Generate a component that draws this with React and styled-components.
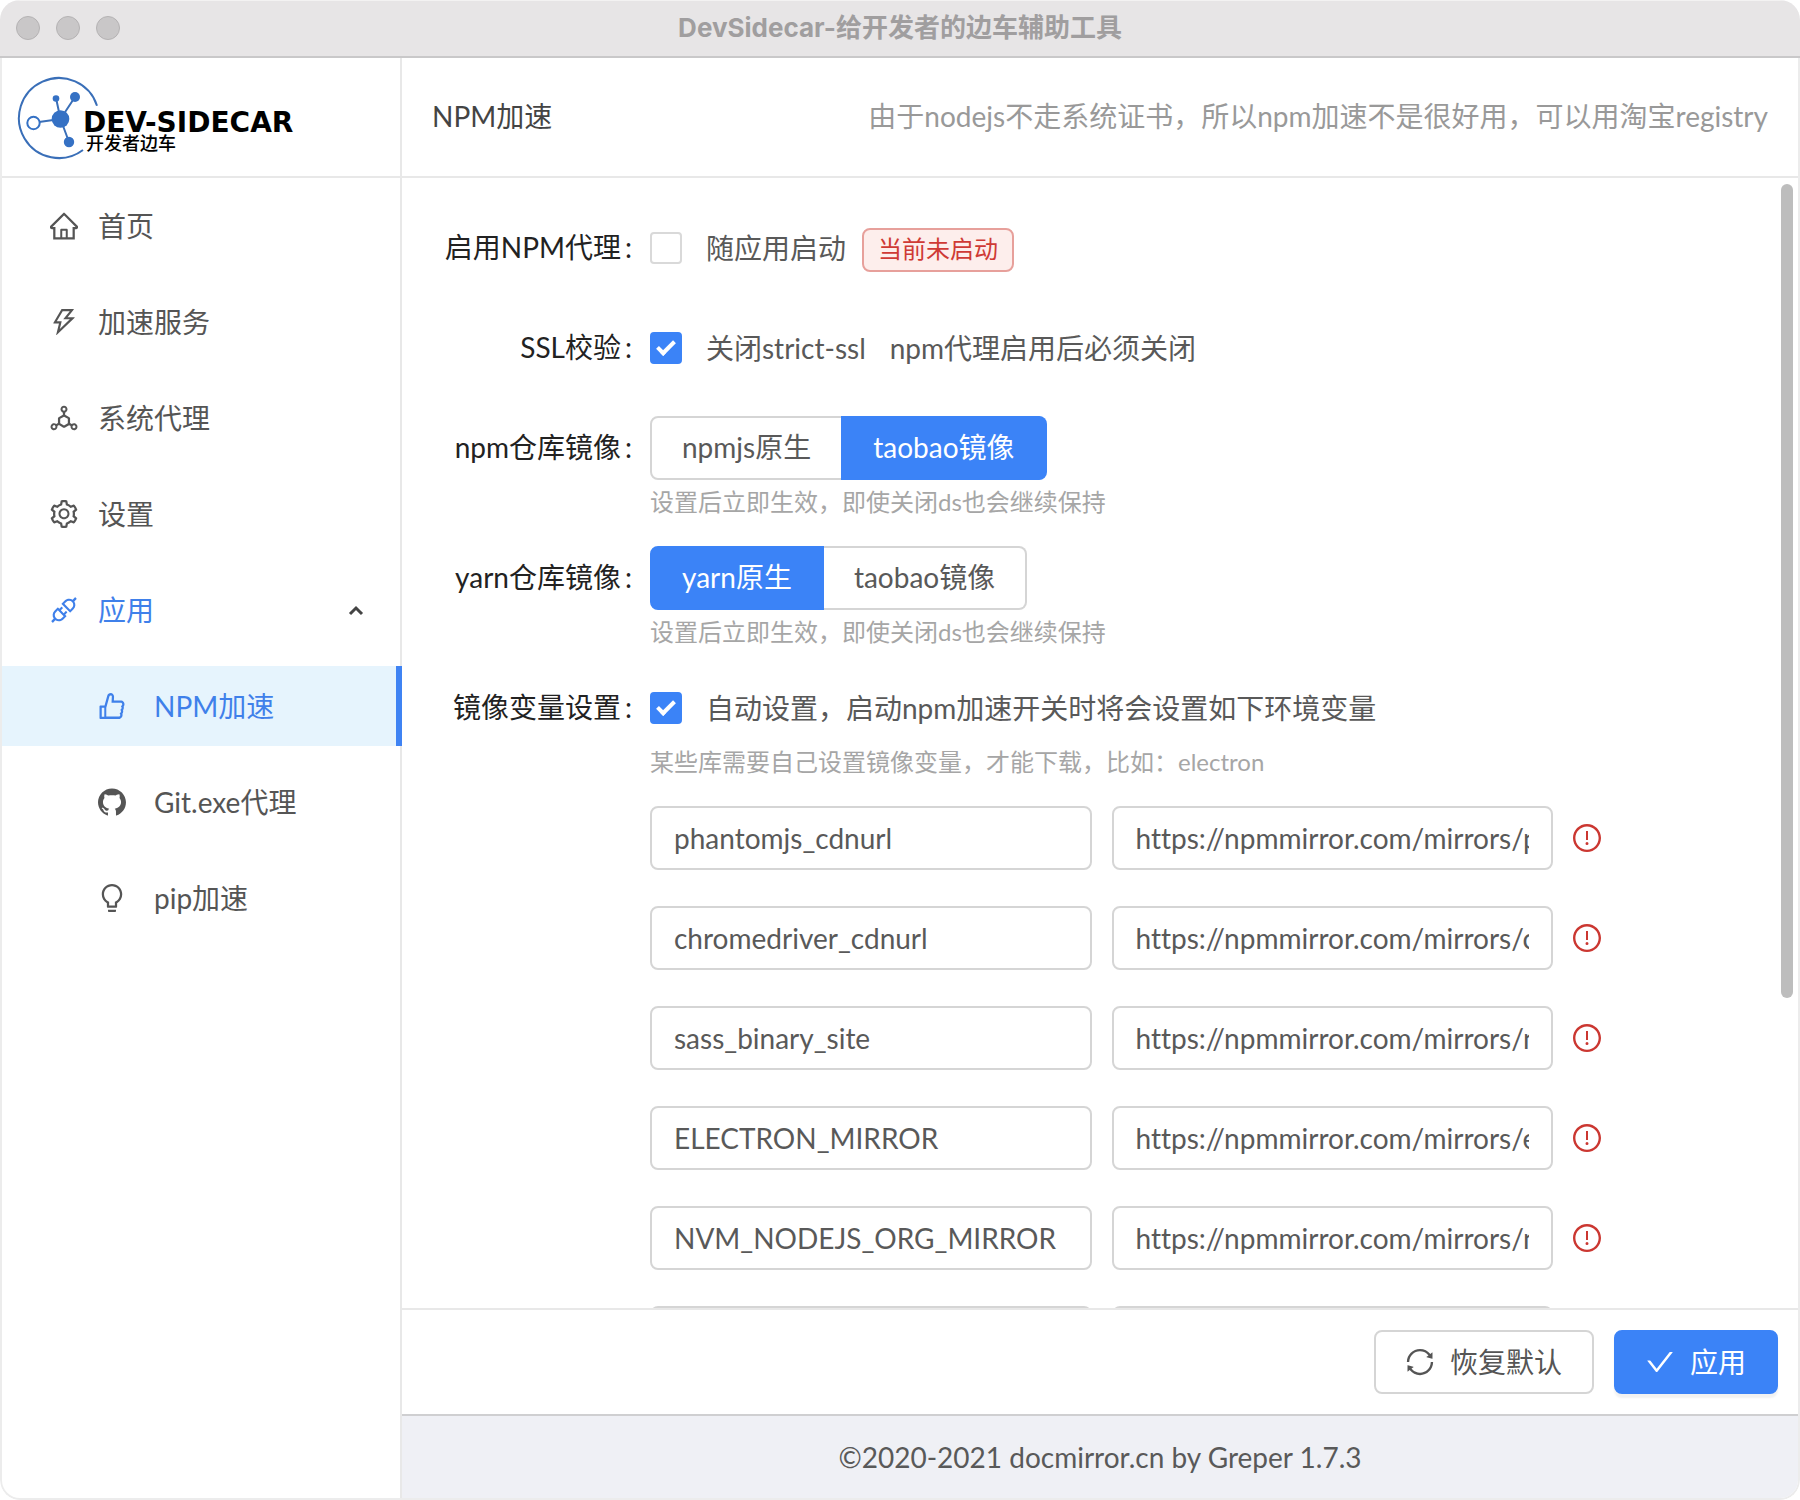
import React, { useState } from 'react';
import styled, { createGlobalStyle } from 'styled-components';
import {
  AiOutlineHome,
  AiOutlineThunderbolt,
  AiOutlineDeploymentUnit,
  AiOutlineSetting,
  AiOutlineApi,
  AiOutlineLike,
  AiFillGithub,
  AiOutlineBulb,
  AiOutlineExclamationCircle,
  AiOutlineSync,
  AiOutlineCheck,
} from 'react-icons/ai';

// trims the blank edge that the icon set leaves round each glyph
const iconBox = '64 64 896 896';

const menu = [
  { text: '首页', icon: AiOutlineHome },
  { text: '加速服务', icon: AiOutlineThunderbolt },
  { text: '系统代理', icon: AiOutlineDeploymentUnit },
  { text: '设置', icon: AiOutlineSetting },
];

const subMenu = [
  { text: 'NPM加速', icon: AiOutlineLike, active: true },
  { text: 'Git.exe代理', icon: AiFillGithub },
  { text: 'pip加速', icon: AiOutlineBulb },
];

const variables = [
  { key: 'phantomjs_cdnurl', value: 'https://npmmirror.com/mirrors/phantomjs' },
  { key: 'chromedriver_cdnurl', value: 'https://npmmirror.com/mirrors/chromedriver' },
  { key: 'sass_binary_site', value: 'https://npmmirror.com/mirrors/node-sass' },
  { key: 'ELECTRON_MIRROR', value: 'https://npmmirror.com/mirrors/electron/' },
  { key: 'NVM_NODEJS_ORG_MIRROR', value: 'https://npmmirror.com/mirrors/node' },
  { key: 'CHROMEDRIVER_CDNURL', value: 'https://npmmirror.com/mirrors/chromedriver' },
];

const Logo = () => (
  <LogoSvg viewBox="0 0 290 88" role="img" aria-label="DEV-SIDECAR 开发者边车">
    <g fill="none" stroke="#3a6fb8" strokeWidth="2">
      <path d="M81 31.700A40 40 0 1 0 67 76" />
      <path d="M44.500 45L40 24M44.500 45L59 23M44.500 45L23 48M44.500 45L53 68" />
    </g>
    <g fill="#3571c4">
      <circle cx="44.500" cy="45" r="8.800" />
      <circle cx="40" cy="24.500" r="3.300" />
      <circle cx="59" cy="23" r="5" />
      <circle cx="53" cy="68" r="5.200" />
    </g>
    <circle cx="17.500" cy="49" r="6.200" fill="#fff" stroke="#3571c4" strokeWidth="2" />
    <LogoName x="67" y="58">DEV-SIDECAR</LogoName>
    <LogoSub x="70" y="76">开发者边车</LogoSub>
  </LogoSvg>
);

const Registry = ({ name, options, selected, label }) => {
  const [value, setValue] = useState(selected);
  return (
    <RadioGroup role="radiogroup" aria-label={label}>
      {options.map((option) => (
        <RadioButton key={option} $checked={value === option}>
          <input
            type="radio"
            name={name}
            checked={value === option}
            onChange={() => setValue(option)}
          />
          {option}
        </RadioButton>
      ))}
    </RadioGroup>
  );
};

const App = () => {
  return (
    <>
      <GlobalStyle />
      <Window>
        <TitleBar>
          <Lights>
            <Light />
            <Light />
            <Light />
          </Lights>
          <WindowTitle>DevSidecar-给开发者的边车辅助工具</WindowTitle>
        </TitleBar>
        <Body>
          <Sidebar>
            <LogoBox>
              <Logo />
            </LogoBox>
            <Menu>
              {menu.map(({ text, icon: Icon }) => (
                <MenuItem key={text} href="#">
                  <Icon viewBox={iconBox} />
                  {text}
                </MenuItem>
              ))}
              <MenuToggle type="button" aria-expanded="true">
                <AiOutlineApi viewBox={iconBox} />
                应用
                <Arrow viewBox="0 0 16 12">
                  <path d="M2 10L8 4L14 10" />
                </Arrow>
              </MenuToggle>
              {subMenu.map(({ text, icon: Icon, active }) => (
                <SubMenuItem key={text} href="#" $active={active}>
                  <Icon viewBox={iconBox} />
                  {text}
                </SubMenuItem>
              ))}
            </Menu>
          </Sidebar>
          <Main>
            <Header>
              <PageTitle>NPM加速</PageTitle>
              <Notice>由于nodejs不走系统证书，所以npm加速不是很好用，可以用淘宝registry</Notice>
            </Header>
            <ScrollArea>
              <Form id="npm-form">
                <FormRow>
                  <Label htmlFor="startup">启用NPM代理<Colon>:</Colon></Label>
                  <Line>
                    <Checkbox id="startup" type="checkbox" />
                    <label htmlFor="startup">随应用启动</label>
                    <Tag>当前未启动</Tag>
                  </Line>
                </FormRow>
                <FormRow>
                  <Label htmlFor="ssl">SSL校验<Colon>:</Colon></Label>
                  <Line>
                    <Checkbox id="ssl" type="checkbox" defaultChecked />
                    <label htmlFor="ssl">关闭strict-ssl</label>
                    <Hint>npm代理启用后必须关闭</Hint>
                  </Line>
                </FormRow>
                <FormRow $tight>
                  <Label as="div">npm仓库镜像<Colon>:</Colon></Label>
                  <div>
                    <Registry
                      name="npm"
                      label="npm仓库镜像"
                      options={['npmjs原生', 'taobao镜像']}
                      selected="taobao镜像"
                    />
                    <Help>设置后立即生效，即使关闭ds也会继续保持</Help>
                  </div>
                </FormRow>
                <FormRow $tight>
                  <Label as="div">yarn仓库镜像<Colon>:</Colon></Label>
                  <div>
                    <Registry
                      name="yarn"
                      label="yarn仓库镜像"
                      options={['yarn原生', 'taobao镜像']}
                      selected="yarn原生"
                    />
                    <Help>设置后立即生效，即使关闭ds也会继续保持</Help>
                  </div>
                </FormRow>
                <FormRow>
                  <Label htmlFor="variables">镜像变量设置<Colon>:</Colon></Label>
                  <div>
                    <Line>
                      <Checkbox id="variables" type="checkbox" defaultChecked />
                      <label htmlFor="variables">自动设置，启动npm加速开关时将会设置如下环境变量</label>
                    </Line>
                    <Help>某些库需要自己设置镜像变量，才能下载，比如：electron</Help>
                    <Variables>
                      {variables.map(({ key, value }) => (
                        <VariableRow key={key}>
                          <Input defaultValue={key} aria-label="变量名" />
                          <Input defaultValue={value} aria-label={key} />
                          <AiOutlineExclamationCircle viewBox={iconBox} />
                        </VariableRow>
                      ))}
                    </Variables>
                  </div>
                </FormRow>
              </Form>
              <Thumb />
            </ScrollArea>
            <Actions>
              <Button type="reset" form="npm-form">
                <AiOutlineSync viewBox={iconBox} />
                恢复默认
              </Button>
              <Button type="button" $primary>
                <AiOutlineCheck viewBox={iconBox} />
                应用
              </Button>
            </Actions>
            <Footer>©2020-2021 docmirror.cn by Greper 1.7.3</Footer>
          </Main>
        </Body>
      </Window>
    </>
  );
};

const GlobalStyle = createGlobalStyle`
  * {
    box-sizing: border-box;
  }
  body {
    margin: 0;
    background: #fff;
    color: #595959;
    font-family: Lato, "Noto Sans CJK SC", sans-serif;
    font-size: 28px;
    font-variant-ligatures: none;
    line-height: 44px;
  }
  input, button {
    font: inherit;
    font-variant-ligatures: none;
    color: inherit;
  }
`;

const Window = styled.div`
  display: flex;
  flex-direction: column;
  height: 100vh;
  border-radius: 20px;
  overflow: hidden;
`;

const TitleBar = styled.header`
  flex: none;
  display: grid;
  grid-template-columns: 1fr auto 1fr;
  align-items: center;
  height: 58px;
  padding: 0 16px 2px;
  background: #e7e5e6;
  border-top: 1px solid #f3f2f2;
  border-bottom: 2px solid #c9c8c9;
`;

const Lights = styled.div`
  display: flex;
  gap: 16px;
`;

const Light = styled.span`
  width: 24px;
  height: 24px;
  border: 1px solid #b4b2b3;
  border-radius: 50%;
  background: #c9c7c8;
`;

const WindowTitle = styled.span`
  color: #a09e9f;
  font-family: Inter, "Noto Sans CJK SC", sans-serif;
  font-size: 26px;
  font-weight: 700;
`;

const Body = styled.div`
  flex: 1;
  min-height: 0;
  display: flex;
  border: 2px solid #ececec;
  border-top: 0;
  border-radius: 0 0 20px 20px;
  overflow: hidden;
`;

const Sidebar = styled.aside`
  flex: none;
  width: 400px;
  border-right: 2px solid #e8e8e8;
`;

const LogoBox = styled.div`
  height: 120px;
  padding: 16px 14px;
  border-bottom: 2px solid #e8e8e8;
`;

const LogoSvg = styled.svg`
  display: block;
  width: 290px;
  height: 88px;
`;

const LogoName = styled.text`
  fill: #000;
  font-family: "DejaVu Sans", sans-serif;
  font-size: 28px;
  font-weight: 700;
`;

const LogoSub = styled.text`
  fill: #000;
  font-family: "Noto Sans CJK SC", sans-serif;
  font-size: 18px;
  font-weight: 500;
`;

const Menu = styled.nav`
  display: flex;
  flex-direction: column;
  gap: 16px;
  padding-top: 8px;
`;

const MenuItem = styled.a`
  display: flex;
  align-items: center;
  gap: 20px;
  height: 80px;
  padding: 0 36px 0 48px;
  color: #555;
  text-decoration: none;
`;

const MenuToggle = styled(MenuItem).attrs({ as: 'button' })`
  border: 0;
  background: none;
  color: #3f80ea;
`;

const SubMenuItem = styled(MenuItem)`
  gap: 28px;
  padding-left: 96px;
  margin-right: -2px;
  ${({ $active }) =>
    $active &&
    `
    color: #3f80ea;
    background: #e6f4fd;
    border-right: 6px solid #3f83f3;
  `}
`;

const Arrow = styled.svg`
  width: 16px;
  height: 12px;
  margin-left: auto;
  fill: none;
  stroke: #444;
  stroke-width: 3;
`;

const Main = styled.main`
  flex: 1;
  min-width: 0;
  display: flex;
  flex-direction: column;
`;

const Header = styled.div`
  flex: none;
  display: flex;
  align-items: center;
  justify-content: space-between;
  height: 120px;
  padding: 0 30px 2px;
  border-bottom: 2px solid #e8e8e8;
`;

const PageTitle = styled.h1`
  margin: 0;
  color: #444;
  font-size: 28px;
  font-weight: 400;
`;

const Notice = styled.span`
  color: #999;
`;

const ScrollArea = styled.div`
  position: relative;
  flex: 1;
  min-height: 0;
  display: flex;
`;

const Form = styled.form`
  flex: 1;
  min-width: 0;
  padding: 38px 197px 0 0;
  overflow-y: auto;
  scrollbar-width: none;
`;

// floats over the content like a macOS scrollbar
const Thumb = styled.div`
  position: absolute;
  top: 6px;
  right: 5px;
  width: 12px;
  height: 72%;
  border-radius: 6px;
  background: #bdbdbd;
`;

const FormRow = styled.div`
  display: grid;
  grid-template-columns: 230px minmax(0, 1fr);
  column-gap: 18px;
  margin-bottom: ${({ $tight }) => ($tight ? '22px' : '36px')};
`;

const Label = styled.label`
  color: #222;
  line-height: 62px;
  text-align: right;
`;

const Colon = styled.span`
  margin-left: 4px;
`;

const Line = styled.div`
  display: flex;
  align-items: center;
  height: 64px;
`;

const Checkbox = styled.input`
  appearance: none;
  display: grid;
  place-items: center;
  width: 32px;
  height: 32px;
  margin: 0 24px 0 0;
  border: 2px solid #d9d9d9;
  border-radius: 4px;
  background: #fff;

  &:checked {
    border-color: #3b83f7;
    background: #3b83f7;
  }
  &:checked::after {
    content: '';
    box-sizing: border-box;
    width: 10px;
    height: 18px;
    margin-bottom: 4px;
    border: solid #fff;
    border-width: 0 4px 4px 0;
    transform: rotate(45deg);
  }
`;

const Tag = styled.span`
  height: 44px;
  margin: 4px 0 0 16px;
  padding: 0 14px;
  border: 2px solid #e7a09b;
  border-radius: 8px;
  background: #fdeeec;
  color: #cf3a35;
  font-size: 24px;
  line-height: 38px;
`;

const Hint = styled.span`
  margin-left: 24px;
`;

const RadioGroup = styled.div`
  display: flex;
`;

const RadioButton = styled.label`
  height: 64px;
  padding: 0 30px;
  border: 2px solid ${({ $checked }) => ($checked ? '#3b83f7' : '#d5d5d5')};
  background: ${({ $checked }) => ($checked ? '#3b83f7' : '#fff')};
  color: ${({ $checked }) => ($checked ? '#fff' : '#595959')};
  line-height: 58px;
  cursor: pointer;

  &:first-child {
    border-radius: 8px 0 0 8px;
  }
  &:last-child {
    border-left-width: 0;
    border-radius: 0 8px 8px 0;
    box-shadow: ${({ $checked }) => ($checked ? '-2px 0 0 #3b83f7' : 'none')};
  }
  input {
    position: absolute;
    opacity: 0;
    pointer-events: none;
  }
`;

const Help = styled.div`
  color: #a6a6a6;
  font-size: 24px;
  line-height: 44px;
`;

const Variables = styled.div`
  display: flex;
  flex-direction: column;
  gap: 36px;
  margin-top: 22px;
`;

const VariableRow = styled.div`
  display: grid;
  grid-template-columns: minmax(0, 1fr) minmax(0, 1fr) 28px;
  align-items: center;
  gap: 20px;
  color: #cb3731;
`;

const Input = styled.input`
  width: 100%;
  height: 64px;
  padding: 0 22px;
  border: 2px solid #d5d5d5;
  border-radius: 8px;
  background: #fff;
  color: #595959;
`;

const Actions = styled.div`
  flex: none;
  display: flex;
  justify-content: flex-end;
  gap: 20px;
  height: 106px;
  padding: 20px;
  border-top: 2px solid #e8e8e8;
`;

const Button = styled.button`
  display: flex;
  align-items: center;
  gap: 16px;
  height: 64px;
  padding: 0 30px;
  border: 2px solid ${({ $primary }) => ($primary ? '#3b83f7' : '#d5d5d5')};
  border-radius: 8px;
  background: ${({ $primary }) => ($primary ? '#3b83f7' : '#fff')};
  box-shadow: ${({ $primary }) => ($primary ? '0 4px 2px #f2f2f2' : 'none')};
  color: ${({ $primary }) => ($primary ? '#fff' : '#555')};
  cursor: pointer;
`;

const Footer = styled.footer`
  flex: none;
  height: 84px;
  border-top: 2px solid #cfcfd1;
  background: #eff0f5;
  line-height: 82px;
  text-align: center;
`;

export default App;
